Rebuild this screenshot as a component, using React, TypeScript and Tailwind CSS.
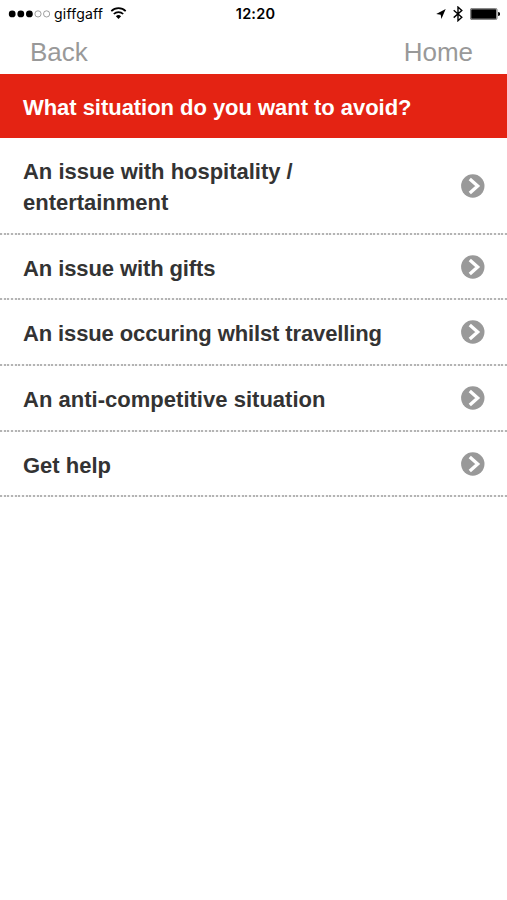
const items = [
  { label: "An issue with hospitality / entertainment", style: "h-[95px] pt-1 leading-[30.5px] tracking-[-0.02px]" },
  { label: "An issue with gifts", style: "h-[63px] pt-[4px] tracking-[-0.1px]" },
  { label: "An issue occuring whilst travelling", style: "h-[64px] pt-[3px] tracking-[-0.12px]" },
  { label: "An anti-competitive situation", style: "h-[64px] pt-[3px] tracking-[0.02px]" },
  { label: "Get help", style: "h-[63px] pt-[4px]" },
];

function StatusBar() {
  return (
    <div className="relative flex h-[27px] items-center justify-between pl-2 pr-[7px] font-['Inter',sans-serif] text-black">
      <div className="flex items-center">
        <svg width="42" height="8" viewBox="0 0 42 8" className="mr-1">
          <circle cx="4.2" cy="3.9" r="3.4" />
          <circle cx="12.8" cy="3.9" r="3.4" />
          <circle cx="21.4" cy="3.9" r="3.4" />
          <circle cx="30" cy="3.9" r="3.1" fill="none" stroke="#777" strokeWidth="0.7" />
          <circle cx="38.6" cy="3.9" r="3.1" fill="none" stroke="#777" strokeWidth="0.7" />
        </svg>
        <span className="text-[14px] leading-none tracking-[0.2px]">giffgaff</span>
        <svg width="17" height="13" viewBox="0 0 17 13" className="ml-[7px]" fill="none" stroke="#000" strokeWidth="1.7">
          <path d="M1.3 4.2a10.2 10.2 0 0 1 14.4 0" />
          <path d="M3.8 7a6.6 6.6 0 0 1 9.4 0" />
          <path d="M8.5 12 5.9 9.3a3.7 3.7 0 0 1 5.2 0z" fill="#000" stroke="none" />
        </svg>
      </div>
      <span className="absolute left-1/2 ml-[2px] -translate-x-1/2 pt-px text-[14.5px] font-semibold leading-none tracking-[0.2px]">
        12:20
      </span>
      <div className="flex items-center">
        <svg width="12" height="10" viewBox="0 0 12 10" className="mr-[6px]">
          <path d="M10.7 0.1 6.4 9.9 5.7 5.8 1.2 4.9z" />
        </svg>
        <svg width="10" height="16" viewBox="0 0 10 16" className="mr-[7px]" fill="none" stroke="#000" strokeWidth="1.4">
          <path d="M0.7 4.2 8.8 11.2 5 14.7V1.1L8.8 4.6 0.7 11.6" />
        </svg>
        <svg width="30" height="12" viewBox="0 0 30 12">
          <rect x="0.4" y="0.4" width="26.6" height="11.2" rx="1.4" fill="#fff" stroke="#222" strokeWidth="0.6" />
          <rect x="1.2" y="1.2" width="25" height="9.6" rx="0.5" />
          <path d="M28.1 4a2 2 0 0 1 0 4z" />
        </svg>
      </div>
    </div>
  );
}

function Chevron() {
  return (
    <svg width="24" height="24" viewBox="0 0 24 24" className="mb-[4px] shrink-0">
      <circle cx="11.8" cy="12" r="11.7" fill="#999" />
      <path d="M8.8 4.9 16.7 12 8.8 19.1" fill="none" stroke="#fff" strokeWidth="3.3" />
    </svg>
  );
}

export default function App() {
  return (
    <div className="min-h-screen w-full bg-white font-['Liberation_Sans',Arial,sans-serif]">
      <StatusBar />
      <nav className="flex h-[47px] items-center justify-between pl-[30px] pr-[34px] pt-[3px] text-[26px] leading-none text-[#999]">
        <button>Back</button>
        <button>Home</button>
      </nav>
      <h1 className="flex h-16 items-center bg-[#e42313] px-[23px] pt-[2px] text-[22px] font-bold tracking-[-0.04px] text-white">
        What situation do you want to avoid?
      </h1>
      <ul>
        {items.map(({ label, style }) => (
          <li key={label}>
            <a className={`flex items-center justify-between pl-[23px] pr-[22px] text-[22px] font-bold text-[#333] ${style}`}>
              <span className="max-w-[370px]">{label}</span>
              <Chevron />
            </a>
            <div className="h-[2px] bg-[repeating-linear-gradient(90deg,#b4b4b4_0_2px,#f4f4f4_2px_3.66px)]" />
          </li>
        ))}
      </ul>
    </div>
  );
}
